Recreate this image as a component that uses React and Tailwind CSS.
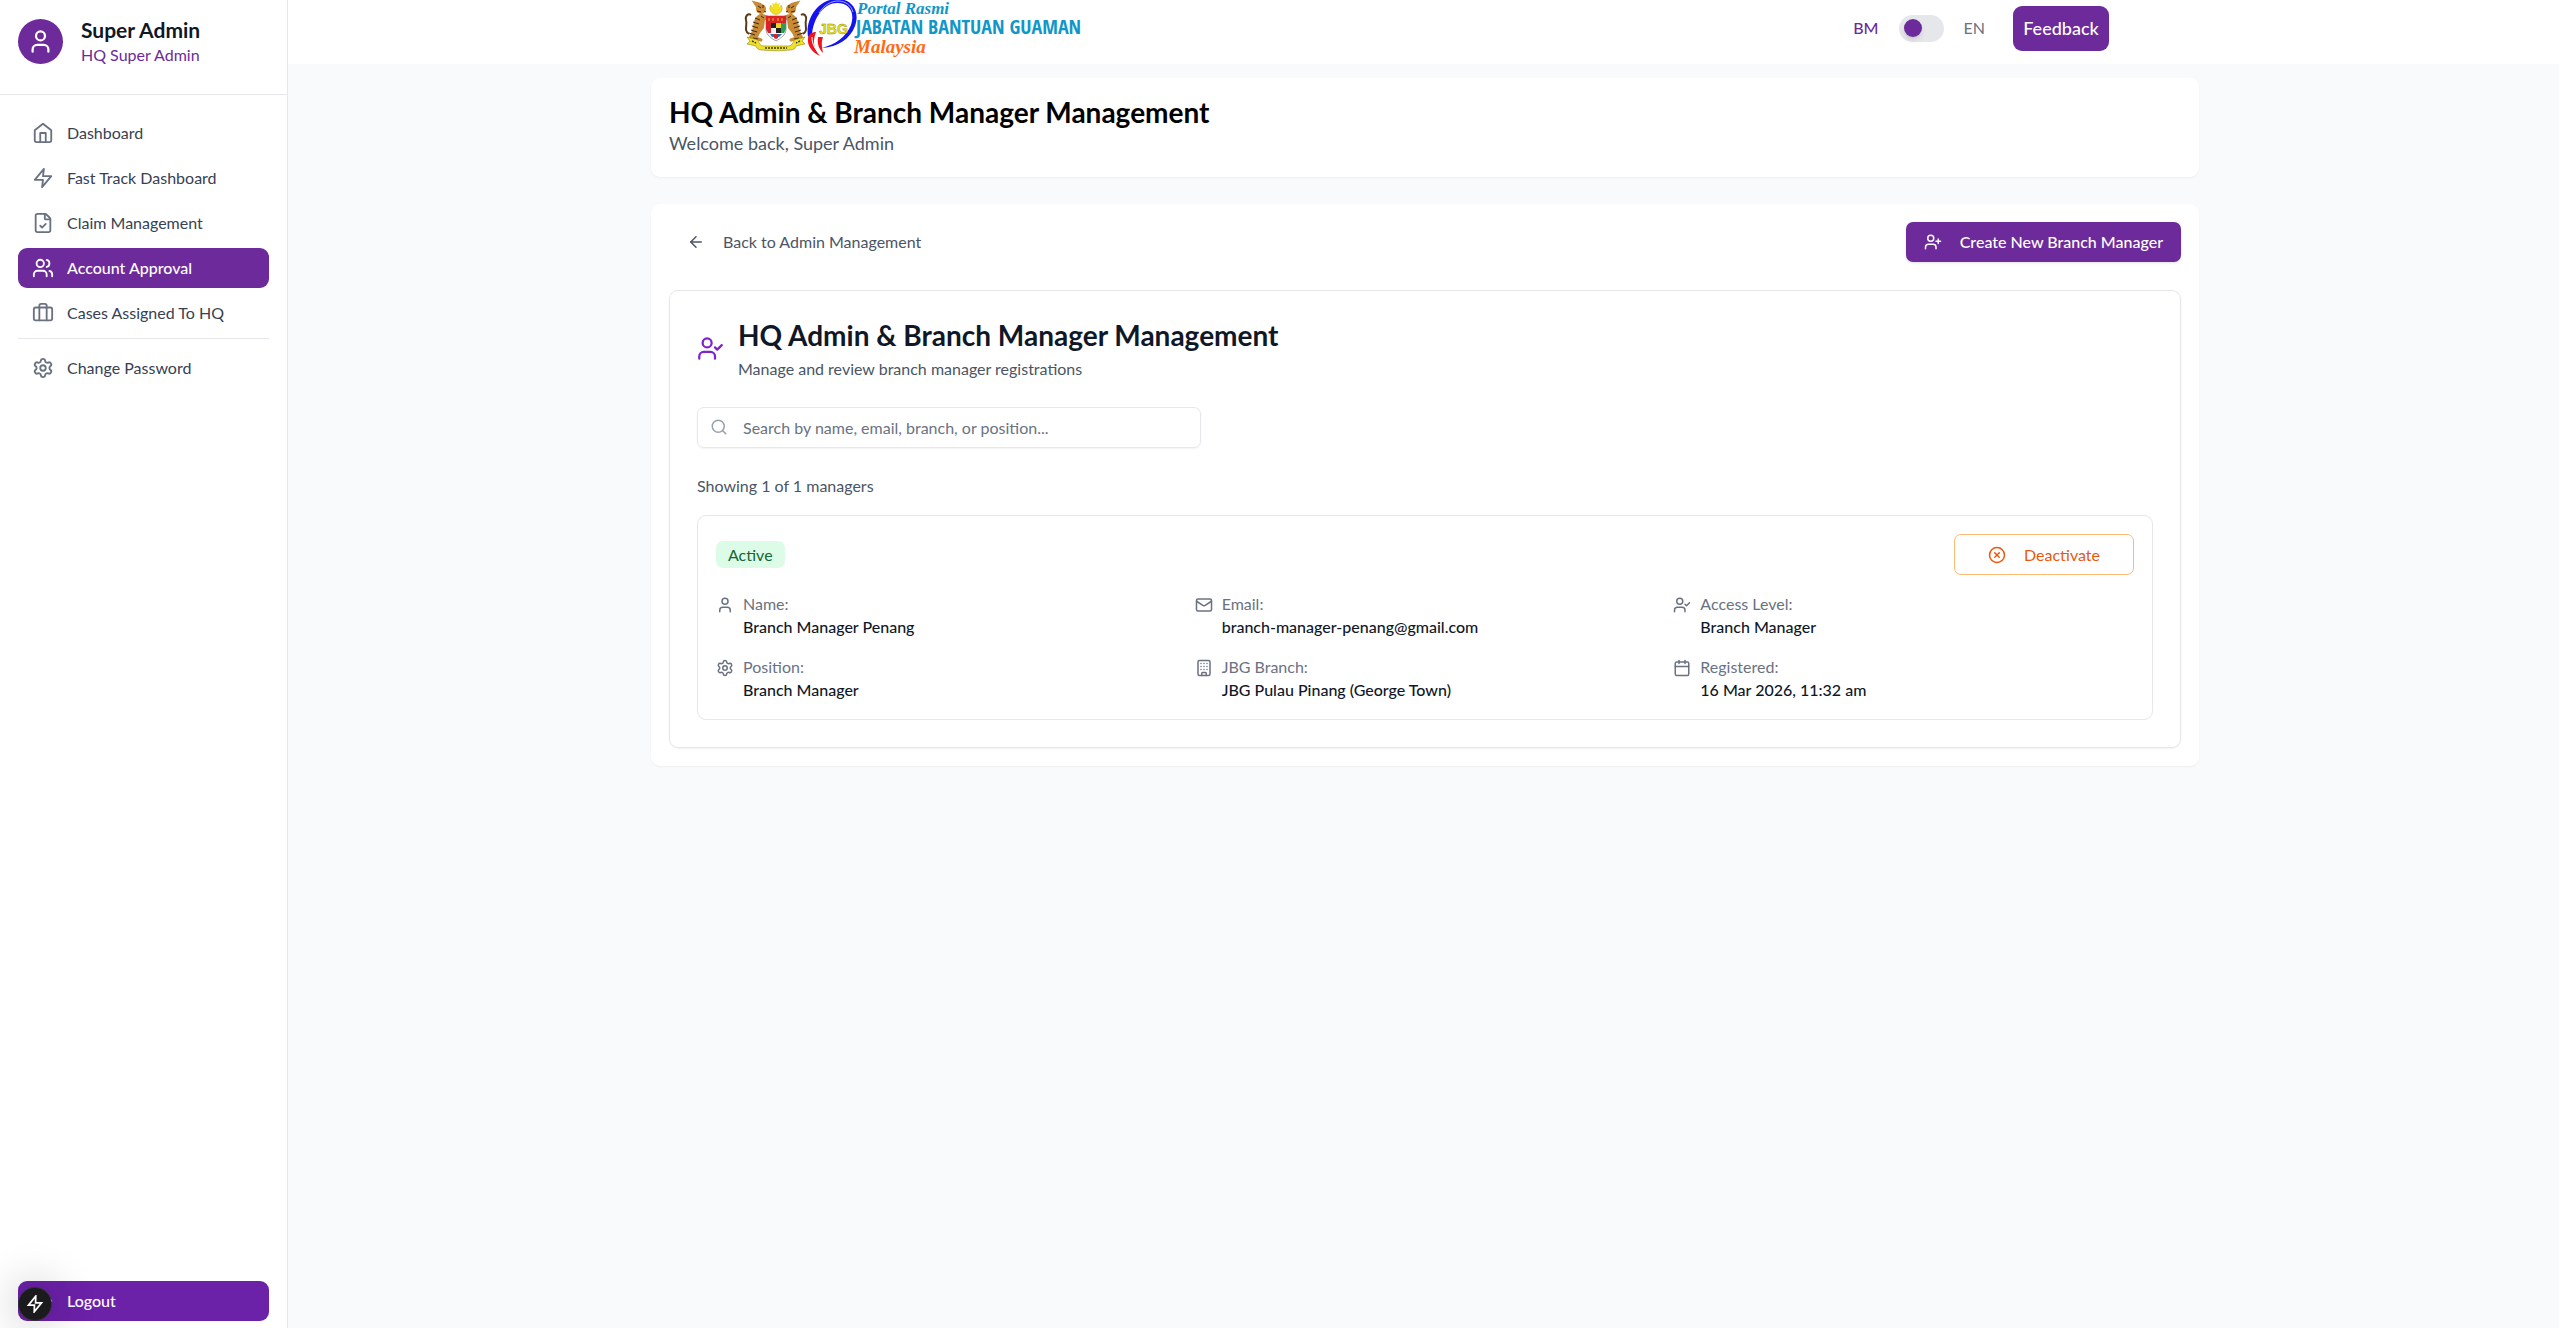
import React, { useState } from 'react';
import {
  ArrowLeft, Briefcase, Building, Calendar, CircleX, FileCheck, LogOut, Mail,
  Search, Settings, User, UserCheck, UserPlus, Users,
} from 'lucide-react';

const HomeIcon = ({ className }) => (
  <svg viewBox="0 0 24 24" fill="none" stroke="currentColor" strokeWidth="2" strokeLinecap="round" strokeLinejoin="round" className={className}>
    <path d="m3 9 9-7 9 7v11a2 2 0 0 1-2 2H5a2 2 0 0 1-2-2z" />
    <path d="M9 22V12h6v10" />
  </svg>
);

const BoltIcon = ({ className }) => (
  <svg viewBox="0 0 24 24" fill="none" stroke="currentColor" strokeWidth="2" strokeLinecap="round" strokeLinejoin="round" className={className}>
    <path d="M13 2 3 14h9l-1 8 10-12h-9l1-8z" />
  </svg>
);

const Tiger = () => (
  <g>
    <path d="M23 14c-4 0-7 3-8 8l-2 9-4 8h9l3-6 4-5 1-8z" fill="#c98a35" />
    <circle cx="22" cy="9" r="5" fill="#c98a35" />
    <path d="m18 6-2-3 4 1zM22 15l6 2M22 20l6-2M14 37l8 3" stroke="#c98a35" strokeWidth="3" strokeLinecap="round" />
    <path d="M10 34C4 30 9 25 7 20c-1-4 2-7 5-5" fill="none" stroke="#5b3a14" strokeWidth="2" />
    <path d="m16 18 5 2m-7 2 6 2m-7 2 6 2m-7 2 6 2m-8 1 6 2M19 6l3 2m2-3v3m-6 3 4 1m3-1 2 1m-5 4 3 2m-11 20 5 1" fill="none" stroke="#3a2812" strokeWidth="1" />
  </g>
);

const PortalLogo = () => (
  <svg viewBox="0 0 344 64" className="h-16 w-[344px] shrink-0" role="img" aria-label="Portal Rasmi Jabatan Bantuan Guaman Malaysia">
    {/* coat of arms */}
    <g transform="translate(-2 0)"><Tiger /></g>
    <g transform="translate(72 0) scale(-1 1)"><Tiger /></g>
    <path d="M30 5a6 6 0 1 0 10 0 5 5 0 0 1-10 0z" fill="#f4e01f" stroke="#b9a300" strokeWidth=".5" />
    <path d="m35 1 1 3 3-1-1 3 2 2-3 1-2 3-2-3-3-1 2-2-1-3 3 1z" fill="#f4e01f" />
    <path d="M25 16h20v13c0 6-5 9-10 12-5-3-10-6-10-12z" fill="#fff" stroke="#888" strokeWidth=".8" />
    <path d="M25 16h20v7H25z" fill="#d8232a" />
    <path d="M28 18v3m4-3v3m5-3v3m4-3v3" stroke="#f4b21f" />
    <path d="M25 23h5v10h-3l-2-4z" fill="#d8232a" />
    <path d="M30 23h5v5h-5z" fill="#222" />
    <path d="M35 23h5v5h-5z" fill="#f4d51f" />
    <path d="M30 28h5v5h-5z" fill="#f2f2f2" />
    <path d="M35 28h5v5h-5z" fill="#222" />
    <path d="M40 23h5v6l-2 4h-3z" fill="#2e9e57" />
    <path d="M29 34h4v3h-2zM37 34h4l-3 3h-1z" fill="#2d6fb5" />
    <path d="M33 34h4v4l-2 1-2-1z" fill="#d8232a" />
    <path d="m6 37 11 3c1 4 3 6 6 6h24c3 0 5-2 6-6l11-3-3 4 3 3-9 2c-1 3-3 4-6 4-9 1-19 1-28 0-3 0-5-1-6-4l-9-2 3-3z" fill="#efe02a" stroke="#8f8412" strokeWidth=".6" />
    <path d="M24 48h22M11 41l4 2m44-2-4 2" fill="none" stroke="#3c3a12" strokeWidth="1.4" strokeDasharray="2 1" />
    {/* JBG ring */}
    <path fillRule="evenodd" d="M67 37C64 18 78-1 96-1c16 0 23 13 18 27-5 13-17 21-33 22 14-4 24-11 29-23 4-12-1-22-14-22C84 3 73 16 71 34z" fill="#1414f0" />
    <path d="M78 13C83 5 90 1 97 1c7 0 13 4 15 11" fill="none" stroke="#fff" strokeWidth=".6" />
    <path d="M67 38c-1 8 4 14 12 18-6-7-8-13-4-24-4 0-7 2-8 6z" fill="#f0141c" />
    <path d="M77 37c-1 7 1 12 5 16-1-6-2-11 0-16z" fill="#f0141c" />
    <path d="M71 37c0 7 3 12 7 16" fill="none" stroke="#fff" strokeWidth="1" />
    <text x="78" y="34" className="font-['Liberation_Sans',sans-serif] text-[14px] font-bold" fill="#f3e21c" stroke="#8b8300" strokeWidth=".4">JBG</text>
    {/* wordmark */}
    <text x="116" y="14" className="font-['Liberation_Serif',serif] text-[17px] font-bold italic" fill="#1296c8">Portal Rasmi</text>
    <text x="115" y="34" className="font-['Open_Sans_Condensed','Roboto_Condensed',sans-serif] text-[20px] font-bold" fill="#1296c8">JABATAN BANTUAN GUAMAN</text>
    <text x="113" y="53" className="font-['Liberation_Serif',serif] text-[19px] font-bold italic" fill="#ff6a13">Malaysia</text>
  </svg>
);

const navItems = [
  { name: 'Dashboard', icon: HomeIcon },
  { name: 'Fast Track Dashboard', icon: BoltIcon },
  { name: 'Claim Management', icon: FileCheck },
  { name: 'Account Approval', icon: Users, active: true },
  { name: 'Cases Assigned To HQ', icon: Briefcase },
];

const managers = [
  {
    status: 'Active',
    fields: [
      { label: 'Name:', value: 'Branch Manager Penang', icon: User },
      { label: 'Email:', value: 'branch-manager-penang@gmail.com', icon: Mail },
      { label: 'Access Level:', value: 'Branch Manager', icon: UserCheck },
      { label: 'Position:', value: 'Branch Manager', icon: Settings },
      { label: 'JBG Branch:', value: 'JBG Pulau Pinang (George Town)', icon: Building },
      { label: 'Registered:', value: '16 Mar 2026, 11:32 am', icon: Calendar },
    ],
  },
];

const NavLink = ({ item }) => (
  <a
    href="#"
    className={`flex h-10 items-center gap-[13px] rounded-[9px] px-[14px] text-base ${
      item.active ? 'bg-[#6d2a9a] font-medium text-white' : 'text-gray-700'
    }`}
  >
    <item.icon className={`size-[22px] ${item.active ? 'text-white' : 'text-gray-500'}`} />
    {item.name}
  </a>
);

const Sidebar = () => (
  <aside className="sticky top-0 flex h-screen w-72 shrink-0 flex-col border-r border-gray-200 bg-white">
    <div className="flex items-center gap-[18px] border-b border-gray-200 px-[18px] pt-4 pb-7">
      <div className="flex size-[45px] items-center justify-center rounded-full bg-[#6d2a9a] text-white">
        <User className="size-[27px]" />
      </div>
      <div>
        <p className="text-[21px] leading-7 font-bold text-gray-900">Super Admin</p>
        <p className="text-base leading-[22px] text-[#6d2a9a]">HQ Super Admin</p>
      </div>
    </div>
    <nav className="flex flex-1 flex-col gap-[5px] px-[18px] pt-[18px]">
      {navItems.map((item) => <NavLink key={item.name} item={item} />)}
      <div className="border-t border-gray-200 pt-[9px]">
        <NavLink item={{ name: 'Change Password', icon: Settings }} />
      </div>
    </nav>
    <div className="px-[18px] pb-[7px]">
      <button type="button" className="flex h-10 w-full items-center gap-[13px] rounded-[9px] bg-[#6b21a8] px-[14px] text-base font-medium text-white">
        <LogOut className="size-[22px]" />
        Logout
      </button>
    </div>
    <button
      type="button"
      aria-label="Developer tools"
      className="absolute bottom-[7px] left-[18px] flex size-[34px] items-center justify-center rounded-full border border-[#333] bg-[#1b1b1d] text-white shadow-[0_0_40px_10px_rgba(0,0,0,0.14)]"
    >
      <svg viewBox="0 0 16 16" fill="none" stroke="currentColor" strokeWidth="1.5" className="size-[18px]">
        <path d="M8.7 1 2.2 9h5.3l-.2 6 6.5-8H8.5z" strokeLinejoin="miter" />
      </svg>
    </button>
  </aside>
);

const Header = () => {
  const [english, setEnglish] = useState(false);

  return (
    <header className="h-16 bg-white pl-[3px]">
      <div className="mx-auto flex max-w-[1440px] items-start justify-between px-9">
        <PortalLogo />
        <div className="flex h-14 items-center text-base">
          <span className={english ? 'text-gray-500' : 'font-medium text-[#6d2a9a]'}>BM</span>
          <label className="relative mx-5 block h-[27px] w-[45px]">
            <input type="checkbox" className="peer sr-only" aria-label="Switch language" checked={english} onChange={(e) => setEnglish(e.target.checked)} />
            <span className="block h-full rounded-full bg-gray-200" />
            <span className="absolute top-1 left-[5px] size-[18px] rounded-full bg-[#6d2a9a] shadow-md peer-checked:left-[22px]" />
          </label>
          <span className={english ? 'font-medium text-[#6d2a9a]' : 'text-gray-500'}>EN</span>
          <button type="button" className="ml-7 h-[45px] w-24 rounded-[9px] bg-[#6d2a9a] text-lg font-medium text-white">Feedback</button>
        </div>
      </div>
    </header>
  );
};

const ManagerCard = ({ manager }) => (
  <article className="rounded-[9px] border border-gray-200 p-[18px]">
    <div className="mb-[18px] flex items-center justify-between">
      <span className="rounded-[7px] bg-[#dcfce7] px-3 py-[3px] text-base leading-[21px] text-[#166534]">{manager.status}</span>
      <button type="button" className="flex h-[41px] w-[180px] items-center justify-center gap-[18px] rounded-[7px] border border-[#fdba74] bg-white text-base text-[#ea580c]">
        <CircleX className="size-[18px]" />
        Deactivate
      </button>
    </div>
    <dl className="grid grid-cols-3 gap-[18px]">
      {manager.fields.map((field) => (
        <div key={field.label} className="flex gap-[9px]">
          <field.icon className="mt-[3px] size-[18px] shrink-0 text-gray-500" />
          <div>
            <dt className="text-base leading-[22px] text-gray-500">{field.label}</dt>
            <dd className="text-base leading-[23px] font-medium text-gray-900">{field.value}</dd>
          </div>
        </div>
      ))}
    </dl>
  </article>
);

export default function App() {
  const [query, setQuery] = useState('');

  return (
    <div className="flex min-h-screen bg-gray-50 font-['Lato',sans-serif]">
      <Sidebar />
      <div className="min-w-0 flex-1">
        <Header />
        <div className="pl-[3px]">
          <main className="mx-auto max-w-[1584px] px-[18px] pt-[14px]">
            <section className="rounded-[9px] bg-white px-[18px] pt-4 pb-5 shadow-xs">
              <h1 className="text-[28px] leading-9 font-bold text-black">HQ Admin &amp; Branch Manager Management</h1>
              <p className="text-lg leading-[27px] text-gray-600">Welcome back, Super Admin</p>
            </section>

            <section className="mt-[27px] rounded-[9px] bg-white p-[18px] shadow-xs">
              <div className="flex items-center justify-between">
                <a href="#" className="flex h-10 items-center gap-[18px] px-[18px] text-base text-gray-600">
                  <ArrowLeft className="size-[18px]" />
                  Back to Admin Management
                </a>
                <button type="button" className="flex h-10 items-center gap-[18px] rounded-[7px] bg-[#6d2a9a] px-[18px] text-base font-medium text-white shadow-sm">
                  <UserPlus className="size-[18px]" />
                  Create New Branch Manager
                </button>
              </div>

              <div className="mt-7 rounded-[9px] border border-gray-200 px-[27px] pt-[26px] pb-[27px] shadow-xs">
                <div className="flex items-center gap-[14px]">
                  <UserCheck className="size-[27px] text-[#7e22ce]" />
                  <div>
                    <h2 className="text-[28px] leading-9 font-bold text-gray-900">HQ Admin &amp; Branch Manager Management</h2>
                    <p className="mt-[5px] text-base leading-[22px] text-gray-600">Manage and review branch manager registrations</p>
                  </div>
                </div>

                <div className="relative mt-[27px] max-w-[504px]">
                  <Search className="absolute top-[11px] left-[13px] size-[18px] text-gray-400" />
                  <input
                    type="text"
                    aria-label="Search managers"
                    placeholder="Search by name, email, branch, or position..."
                    value={query}
                    onChange={(e) => setQuery(e.target.value)}
                    className="h-[41px] w-full rounded-[7px] border border-gray-200 pr-3 pb-px pl-[45px] text-base shadow-xs placeholder:text-gray-500"
                  />
                </div>

                <p className="mt-[27px] mb-[18px] text-base leading-[22px] text-gray-600">Showing 1 of 1 managers</p>
                {managers.map((manager, i) => <ManagerCard key={i} manager={manager} />)}
              </div>
            </section>
          </main>
        </div>
      </div>
    </div>
  );
}
